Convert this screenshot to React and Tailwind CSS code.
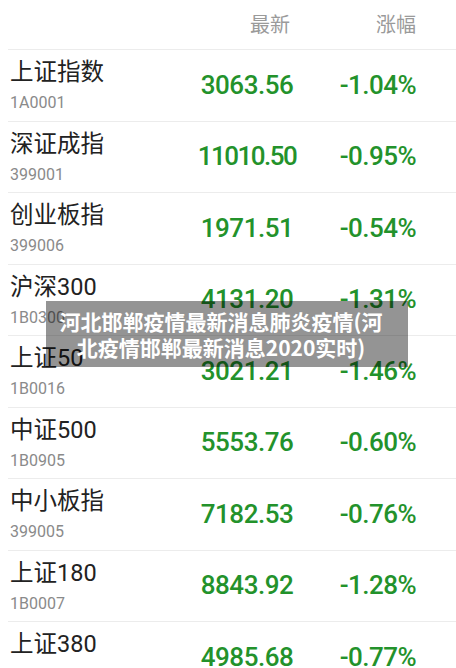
import React from 'react';

const rows = [
  { name: '上证指数', code: '1A0001', price: '3063.56', pct: '-1.04%' },
  { name: '深证成指', code: '399001', price: '11010.50', pct: '-0.95%' },
  { name: '创业板指', code: '399006', price: '1971.51', pct: '-0.54%' },
  { name: '沪深300', code: '1B0300', price: '4131.20', pct: '-1.31%' },
  { name: '上证50', code: '1B0016', price: '3021.21', pct: '-1.46%' },
  { name: '中证500', code: '1B0905', price: '5553.76', pct: '-0.60%' },
  { name: '中小板指', code: '399005', price: '7182.53', pct: '-0.76%' },
  { name: '上证180', code: '1B0007', price: '8843.92', pct: '-1.28%' },
  { name: '上证380', code: '1B0009', price: '4985.68', pct: '-0.77%' },
];

const cjk = "font-['Roboto','Noto_Sans_CJK_SC',sans-serif]";

export default function App() {
  return (
    <div className={`relative w-[456px] h-[668px] overflow-hidden bg-white ${cjk}`}>
      {/* header */}
      <div className="h-[49px] flex items-center text-[20px] text-[#9a9a9a]">
        <div className="ml-[250px] w-[40px] text-center">最新</div>
        <div className="ml-[86px] w-[40px] text-center">涨幅</div>
      </div>

      {rows.map((r) => (
        <div key={r.code} className="ml-[8px] h-[71.5px] border-t border-[#ececec] flex items-center">
          <div className="w-[189px] self-start pl-[2px] pt-[8px]">
            <div className="text-[23.5px] leading-[28px] text-[#222]">{r.name}</div>
            <div className="mt-[7px] text-[16px] leading-[20px] text-[#8a8a8a]">{r.code}</div>
          </div>
          <div className={`w-[100px] text-center text-[26px] font-medium text-[#23922b] ${r.price.length > 7 ? 'tracking-[-1.5px]' : 'tracking-[-0.5px]'}`}>
            {r.price}
          </div>
          <div className="ml-[31px] w-[100px] text-center text-[26px] font-medium tracking-[-0.5px] text-[#23922b]">
            {r.pct}
          </div>
        </div>
      ))}

      {/* caption overlay */}
      <div className="absolute left-[46px] top-[301px] w-[362px] h-[66px] bg-[rgba(0,0,0,0.42)] flex items-center justify-center">
        <div className="text-center text-white font-bold text-[21px] leading-[26px] pr-[12px] font-['Noto_Sans_CJK_SC',sans-serif]">
          河北邯郸疫情最新消息肺炎疫情(河<br />北疫情邯郸最新消息2020实时)
        </div>
      </div>
    </div>
  );
}
